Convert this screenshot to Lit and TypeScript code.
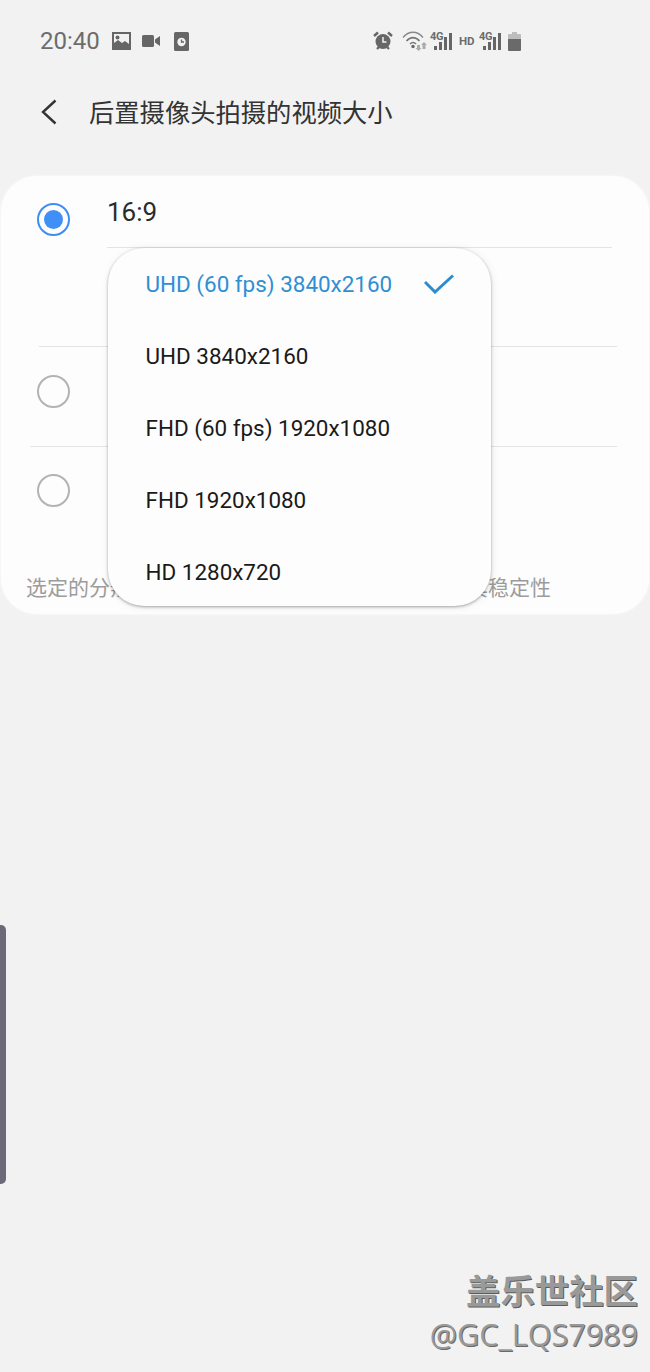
import { LitElement, html, css, svg } from "lit";
import { customElement } from "lit/decorators.js";

const options = [
  "UHD (60 fps) 3840x2160",
  "UHD 3840x2160",
  "FHD (60 fps) 1920x1080",
  "FHD 1920x1080",
  "HD 1280x720",
];

const bars = svg`
  <rect x="0" y="13" width="3" height="4"/>
  <rect x="5" y="9" width="3" height="8"/>
  <rect x="10" y="4" width="3" height="13"/>
  <rect x="15" y="0" width="3" height="17"/>
`;

@customElement("app-root")
export class AppRoot extends LitElement {
  static styles = css`
    :host {
      display: block;
      position: relative;
      width: 650px;
      height: 1372px;
      overflow: hidden;
      background: #f2f2f2;
      font-family: Roboto, "Noto Sans CJK SC", sans-serif;
    }
    .status {
      height: 82px;
      display: flex;
      align-items: center;
      padding-left: 40px;
      color: #6c6c6c;
    }
    .time {
      font-size: 24px;
      width: 72px;
    }
    .left-icons {
      display: flex;
      align-items: center;
    }
    .video {
      margin: 0 14px 0 11px;
    }
    .right-icons {
      display: flex;
      align-items: center;
      margin-left: 184px;
      height: 30px;
    }
    .alarm {
      margin-right: 9px;
    }
    .wifi {
      margin-right: 6px;
    }
    .net {
      position: relative;
      width: 18px;
      height: 17px;
      margin-top: 1px;
    }
    .net span {
      position: absolute;
      left: -4px;
      top: -3px;
      font-size: 11px;
      font-weight: 700;
      line-height: 13px;
      letter-spacing: -0.3px;
    }
    .net svg {
      display: block;
    }
    .hd {
      font-size: 11.5px;
      font-weight: 700;
      width: 15px;
      margin: 0 9px 0 7px;
      white-space: nowrap;
    }
    .battery {
      margin-left: 7px;
    }
    .header {
      height: 60px;
      display: flex;
      align-items: center;
      padding-left: 40px;
      color: #333;
    }
    .title {
      margin: -2px 0 0 31px;
      font-size: 25.3px;
      font-family: "Noto Sans CJK SC", sans-serif;
      font-weight: 400;
      white-space: nowrap;
    }
    .card {
      position: relative;
      margin: 34px 1px 0;
      height: 438px;
      background: #fdfdfd;
      border-radius: 36px;
      box-shadow: 0 0 3px rgba(255, 255, 255, 0.9);
    }
    .group {
      display: flex;
      box-sizing: border-box;
    }
    .first {
      height: 171px;
      margin: 0 32px 0 38px;
      border-bottom: 1px solid #e4e4e4;
    }
    .second {
      height: 100px;
      margin: 0 32px 0 29px;
      padding: 0 0 10px 9px;
      align-items: center;
      border-bottom: 1px solid #e4e4e4;
    }
    .third {
      height: 99px;
      margin: 0 32px 0 29px;
      padding: 27px 0 0 9px;
      align-items: flex-start;
    }
    .radio {
      flex: none;
      box-sizing: border-box;
      width: 33px;
      height: 33px;
      margin-left: -2px;
      border: 2px solid #b3b3b3;
      border-radius: 50%;
      display: flex;
      align-items: center;
      justify-content: center;
    }
    .radio.on {
      margin-top: 27px;
      border-color: #3d8df5;
    }
    .radio.on::after {
      content: "";
      width: 19px;
      height: 19px;
      border-radius: 50%;
      background: #3f8ff7;
    }
    .value {
      flex: 1;
      margin-left: 37px;
      margin-right: 5px;
      height: 72px;
      box-sizing: border-box;
      padding-top: 20px;
      font-size: 26px;
      line-height: 32px;
      color: #2b2b2b;
      border-bottom: 1px solid #e4e4e4;
    }
    .note {
      margin: 25px 0 0 25px;
      font-size: 21px;
      line-height: 30px;
      color: #9c9c9c;
      font-family: "Noto Sans CJK SC", sans-serif;
      font-weight: 400;
      white-space: nowrap;
    }
    .menu {
      position: absolute;
      left: 107px;
      top: 72px;
      width: 383px;
      height: 358px;
      background: #fdfdfd;
      border-radius: 36px;
      box-shadow: 0 1px 3px rgba(0, 0, 0, 0.32), 1px 1px 8px rgba(0, 0, 0, 0.08);
    }
    .item {
      height: 72px;
      display: flex;
      align-items: center;
      justify-content: space-between;
      padding: 0 37px 0 37.5px;
      font-size: 22.45px;
      color: #1a1a1a;
      white-space: nowrap;
    }
    .item.active {
      color: #2f8fd3;
    }
    .handle {
      position: absolute;
      left: 0;
      top: 925px;
      width: 6px;
      height: 259px;
      background: #6c6a78;
      border-radius: 0 5px 5px 0;
    }
    .mark {
      position: absolute;
      right: 12px;
      top: 1266px;
      text-align: right;
      color: #999;
    }
    .mark-name {
      font-family: "Noto Sans CJK SC", sans-serif;
      font-weight: 700;
      font-size: 34.4px;
      line-height: 46px;
      text-shadow: 1px 1px 0 #5c5c5c;
    }
    .mark-user {
      font-family: "Open Sans", sans-serif;
      font-size: 30.5px;
      line-height: 40px;
      margin-top: 2px;
      text-shadow: 1px 1px 0 #6a6a6a;
    }
  `;

  render() {
    return html`
      <div class="status">
        <span class="time">20:40</span>
        <div class="left-icons">
          <svg width="19" height="18" viewBox="0 0 19 18">
            <path fill="#666" fill-rule="evenodd" d="M0 0h19v18H0zM2 2v9l4-3 4 3 3-2 4 3V2z"/>
            <circle cx="5.5" cy="5.5" r="2" fill="#666"/>
          </svg>
          <svg class="video" width="18" height="12" viewBox="0 0 18 12">
            <rect width="12" height="12" rx="1.5" fill="#666"/>
            <path fill="#666" d="M13 4.5 18 1v10l-5-3.5z"/>
          </svg>
          <svg width="15" height="19" viewBox="0 0 15 19">
            <rect width="15" height="19" rx="1.5" fill="#666"/>
            <circle cx="7.5" cy="10" r="4.2" fill="#f2f2f2"/>
            <path d="M7.5 7.5V10H10" fill="none" stroke="#666" stroke-width="1.3"/>
          </svg>
        </div>
        <div class="right-icons">
          <svg class="alarm" width="20" height="20" viewBox="0 0 20 20">
            <path fill="none" stroke="#666" stroke-width="2.4" d="M1 5 5 1.5M19 5l-4-3.5M4 18l2-2M16 18l-2-2"/>
            <circle cx="10" cy="10.5" r="7.5" fill="#666"/>
            <path fill="none" stroke="#f2f2f2" stroke-width="1.5" d="M10 6v5h3.5"/>
          </svg>
          <svg class="wifi" width="26" height="20" viewBox="0 0 26 20">
            <path fill="none" stroke="#888" stroke-width="1.4" d="M1 6.5C7-.5 15-.5 21 6.5"/>
            <path fill="none" stroke="#777" stroke-width="1.6" d="M4.5 10C8.500 5.500 13.500 5.500 17.500 10M8 13c2-2 4-2 6 0"/>
            <circle cx="11" cy="15.500" r="1.700" fill="#666"/>
            <path fill="#aaa" d="M15 14h3v3h1.500l-3 3-3-3H15zM22 11l3 3h-1.500v4h-3v-4H19z"/>
          </svg>
          <div class="net">
            <span>4G</span>
            <svg width="18" height="17" viewBox="0 0 18 17" fill="#666">${bars}</svg>
          </div>
          <span class="hd">HD</span>
          <div class="net">
            <span>4G</span>
            <svg width="18" height="17" viewBox="0 0 18 17" fill="#666">${bars}</svg>
          </div>
          <svg class="battery" width="13" height="19" viewBox="0 0 13 19">
            <path fill="#bdbdbd" d="M4 0h5v2h3a1 1 0 0 1 1 1v4H0V3a1 1 0 0 1 1-1h3z"/>
            <path fill="#6a6a6a" d="M0 7h13v11a1 1 0 0 1-1 1H1a1 1 0 0 1-1-1z"/>
          </svg>
        </div>
      </div>

      <div class="header">
        <svg width="18" height="26" viewBox="0 0 18 26">
          <path fill="none" stroke="#333" stroke-width="2.4" d="M15.500 1.500 3 13l12.500 11.500"/>
        </svg>
        <span class="title">后置摄像头拍摄的视频大小</span>
      </div>

      <div class="card">
        <div class="group first">
          <span class="radio on"></span>
          <div class="value">16:9</div>
        </div>
        <div class="group second"><span class="radio"></span></div>
        <div class="group third"><span class="radio"></span></div>
        <div class="note">选定的分辨率和帧率可能会影响视频的画质以及其稳定性</div>

        <div class="menu">
          ${options.map(
            (o, i) => html`
              <div class="item ${i === 0 ? "active" : ""}">
                <span>${o}</span>
                ${i === 0
                  ? html`<svg width="30" height="20" viewBox="0 0 30 20">
                      <path fill="none" stroke="#2c8cd2" stroke-width="3" d="M1 8l10 10L29 1.500"/>
                    </svg>`
                  : ""}
              </div>
            `
          )}
        </div>
      </div>

      <div class="handle"></div>
      <div class="mark">
        <div class="mark-name">盖乐世社区</div>
        <div class="mark-user">@GC_LQS7989</div>
      </div>
    `;
  }
}
